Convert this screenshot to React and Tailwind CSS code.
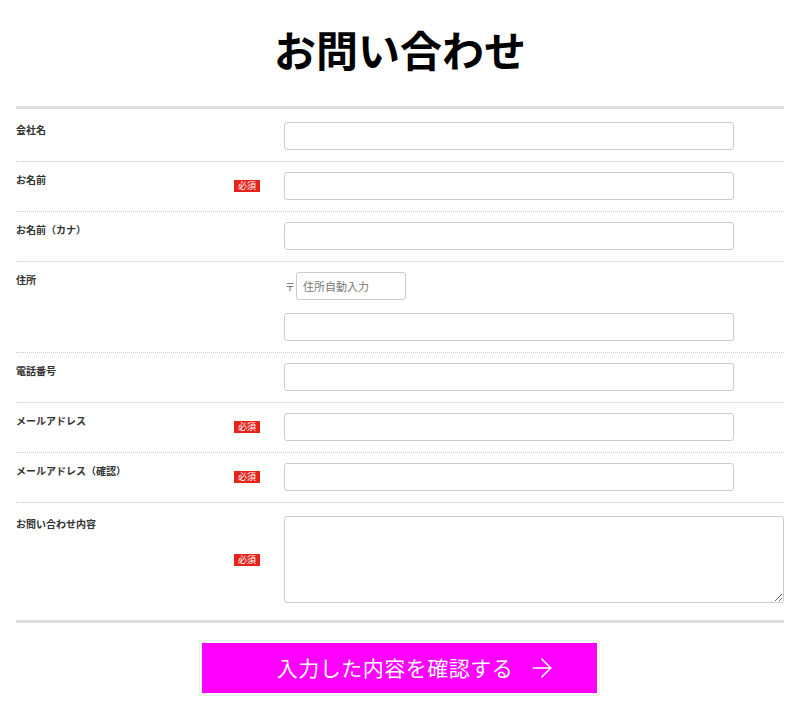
import React from "react";
import { ArrowRight } from "lucide-react";

const font = { fontFamily: '"Noto Sans CJK JP", "Noto Sans", sans-serif' };

function Badge() {
  return (
    <span className="bg-[#e5231a] text-white text-[9px] leading-[12px] h-[12px] px-[4px] inline-block">
      必須
    </span>
  );
}

function Row({ label, required, last, children, pt = "pt-[10px]", pb = "pb-[11px]" }) {
  return (
    <div
      className={`flex ${pt} ${pb} ${last ? "" : "border-b border-dotted border-[#ccc]"}`}
    >
      <div className="w-[252px] flex items-center justify-between pr-[8px]">
        <span className="self-start text-[10px] font-bold text-[#333] leading-[16px]">
          {label}
        </span>
        {required && <Badge />}
      </div>
      <div className="flex-1 pl-[16px]">{children}</div>
    </div>
  );
}

function Input({ w = "w-[450px]" }) {
  return (
    <input
      type="text"
      className={`${w} h-[28px] border border-[#ccc] rounded-[3px] bg-white outline-none block`}
    />
  );
}

export default function App() {
  return (
    <div className="bg-white min-h-[720px] w-[800px]" style={font}>
      <h1 className="text-center text-[42px] font-bold text-black leading-[50px] pt-[24px] pb-[32px]">
        お問い合わせ
      </h1>
      <div className="mx-[16px] border-t-[3px] border-b-[3px] border-[#ddd]">
        <Row label="会社名" pt="pt-[13px]">
          <Input />
        </Row>
        <Row label="お名前" required>
          <Input />
        </Row>
        <Row label="お名前（カナ）">
          <Input />
        </Row>
        <Row label="住所">
          <div className="flex items-center">
            <span className="text-[10px] text-[#666] w-[12px] text-center">〒</span>
            <input
              type="text"
              placeholder="住所自動入力"
              className="w-[110px] h-[28px] border border-[#ccc] rounded-[3px] px-[6px] text-[11px] placeholder:text-[#777] outline-none"
            />
          </div>
          <div className="mt-[13px]">
            <Input />
          </div>
        </Row>
        <Row label="電話番号">
          <Input />
        </Row>
        <Row label="メールアドレス" required>
          <Input />
        </Row>
        <Row label="メールアドレス（確認）" required>
          <Input />
        </Row>
        <Row label="お問い合わせ内容" required last pt="pt-[13px]" pb="pb-[17px]">
          <textarea className="w-[500px] h-[87px] border border-[#ccc] rounded-[3px] outline-none block" />
        </Row>
      </div>
      <div className="flex justify-center pt-[17px]">
        <div className="border border-[#eee] p-[2px] -ml-[2px]">
          <button className="relative w-[395px] h-[50px] bg-[#ff00ff] text-white text-[21px] flex items-center justify-center">
            <span className="tracking-[0.5px] mr-[8px]">入力した内容を確認する</span>
            <ArrowRight className="absolute right-[40px] top-1/2 -translate-y-1/2" size={30} strokeWidth={1.3} />
          </button>
        </div>
      </div>
    </div>
  );
}
